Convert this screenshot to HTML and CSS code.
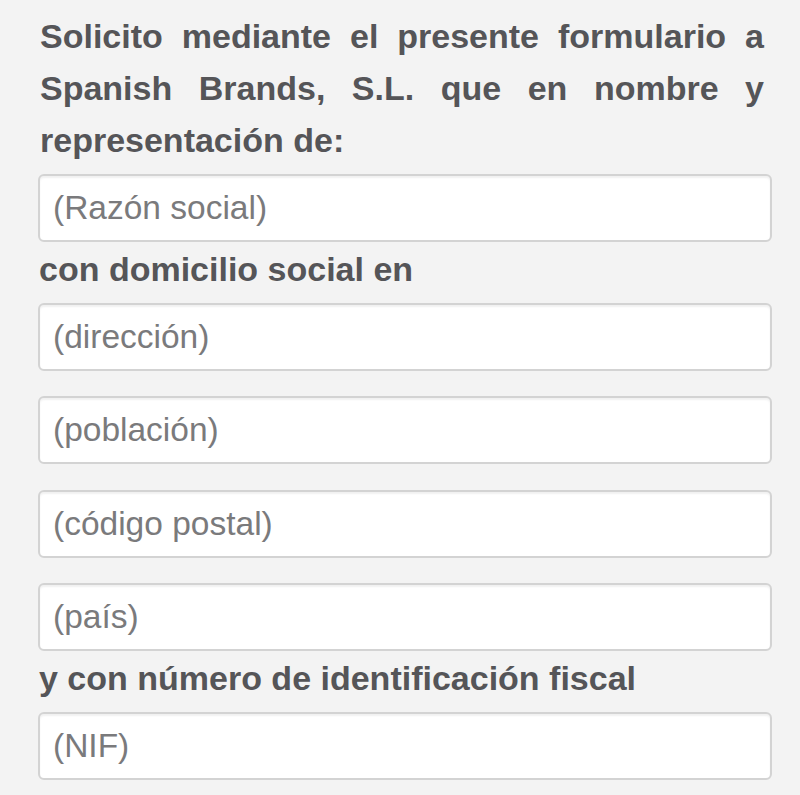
FILE: index.html
```html
<!DOCTYPE html>
<html lang="es">

<head>
  <meta charset="UTF-8">
  <meta name="viewport" content="width=device-width, initial-scale=1.0">
  <title>Solicitud</title>
  <link rel="stylesheet" href="styles.css">
</head>

<body>
  <form class="request-form">
    <p class="intro">Solicito mediante el presente formulario a Spanish Brands, S.L. que en nombre y representación de:</p>
    <input type="text" class="field" placeholder="(Razón social)">

    <label class="label">con domicilio social en</label>
    <div class="field-group">
      <input type="text" class="field" placeholder="(dirección)">
      <input type="text" class="field" placeholder="(población)">
      <input type="text" class="field" placeholder="(código postal)">
      <input type="text" class="field" placeholder="(país)">
    </div>

    <label class="label">y con número de identificación fiscal</label>
    <input type="text" class="field" placeholder="(NIF)">
  </form>
</body>

</html>
```

FILE: styles.css
```css
body {
  margin: 0;
  padding: 0;
  background-color: #f3f3f3;
  font-family: "Liberation Sans", Arial, sans-serif;
  color: #555558;
}

.request-form {
  display: flex;
  flex-direction: column;
  padding: 10px 28px 0 38px;
}

.intro {
  margin: 0 8px 8px 2px;
  font-size: 34px;
  font-weight: bold;
  line-height: 52px;
  text-align: justify;
}

.label {
  display: block;
  margin: 1px 0 8px 1px;
  font-size: 34px;
  font-weight: bold;
  line-height: 52px;
}

.field-group {
  display: flex;
  flex-direction: column;
  gap: 25.4px;
}

.field {
  box-sizing: border-box;
  width: 100%;
  height: 68px;
  margin: 0;
  padding: 0 13px;
  border: 2px solid #d3d3d3;
  border-radius: 6px;
  background-color: #fff;
  box-shadow: inset 0 2px 2px rgba(0, 0, 0, 0.06);
  font-family: "Liberation Sans", Arial, sans-serif;
  font-size: 33.5px;
  color: #555;
}

.field::placeholder {
  color: #7a7a7c;
}
```
